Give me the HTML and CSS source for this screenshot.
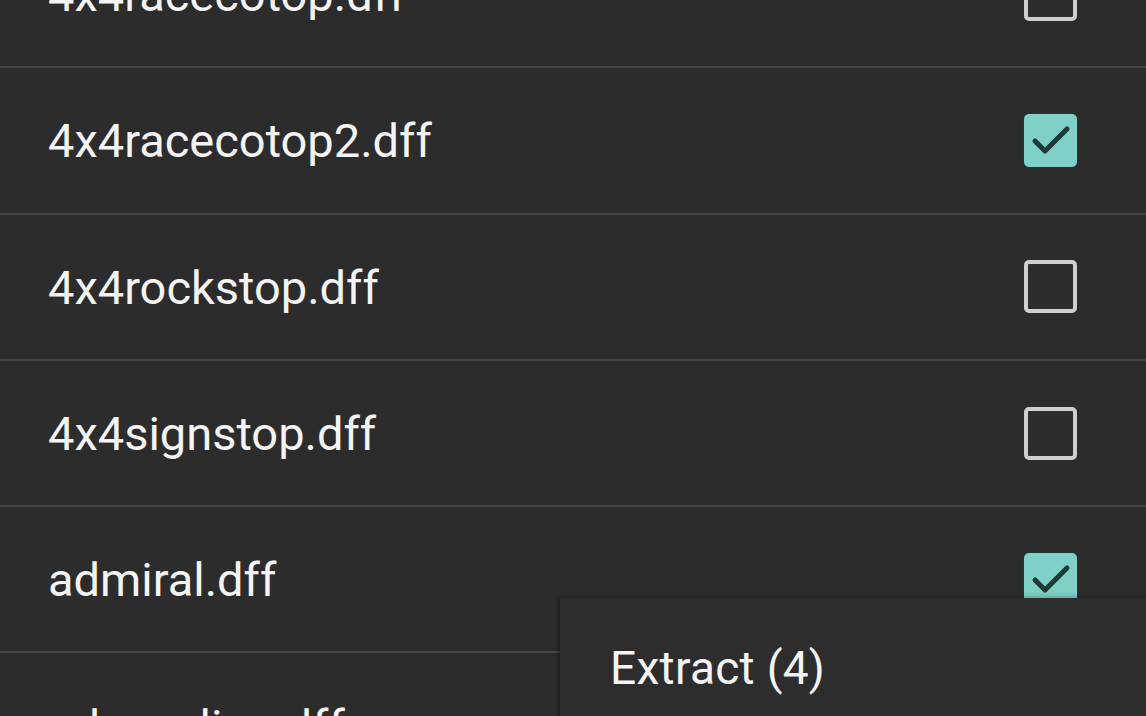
FILE: index.html
```html
<!DOCTYPE html>
<html>
<head>
<meta charset="utf-8">
<link rel="stylesheet" href="styles.css">
</head>
<body>
<div class="list">
  <div class="row"><span class="name">4x4racecotop.dff</span><span class="box"></span></div>
  <div class="row"><span class="name">4x4racecotop2.dff</span><span class="box checked"><svg viewBox="0 0 53 53" width="53" height="53"><path d="M11 27 L21 37 L43 15" fill="none" stroke="#1d3a37" stroke-width="5" stroke-linecap="round" stroke-linejoin="round"/></svg></span></div>
  <div class="row"><span class="name">4x4rockstop.dff</span><span class="box"></span></div>
  <div class="row"><span class="name">4x4signstop.dff</span><span class="box"></span></div>
  <div class="row"><span class="name">admiral.dff</span><span class="box checked"><svg viewBox="0 0 53 53" width="53" height="53"><path d="M11 27 L21 37 L43 15" fill="none" stroke="#1d3a37" stroke-width="5" stroke-linecap="round" stroke-linejoin="round"/></svg></span></div>
  <div class="row"><span class="name">adsnesline.dff</span><span class="box"></span></div>
</div>
<div class="menu">
  <div class="menu-item">Extract (4)</div>
</div>
</body>
</html>
```
FILE: styles.css
```css
html, body {
  margin: 0;
  padding: 0;
  background: #2c2c2c;
  overflow: hidden;
  height: 716px;
}
body {
  font-family: Roboto, "Noto Sans", sans-serif;
  color: #f4f4f4;
  position: relative;
}
.list {
  margin-top: -78px;
}
.row {
  height: 144.3px;
  border-bottom: 2px solid #464646;
  display: flex;
  align-items: center;
  justify-content: space-between;
  padding: 0 69px 0 48px;
}
.name {
  font-size: 47px;
  line-height: 56px;
  padding-top: 2px;
}
.box {
  width: 53px;
  height: 53px;
  box-sizing: border-box;
  border: 4px solid #cfcfcf;
  border-radius: 5px;
  display: flex;
}
.box.checked {
  border: none;
  background: #7fd0c6;
  box-shadow: 0 0 0 1px #1f3634;
}
.menu {
  position: absolute;
  left: 560px;
  top: 598px;
  width: 620px;
  height: 200px;
  background: #2d2d2d;
  box-shadow: -2px 0 6px rgba(0,0,0,0.35);
}
.menu-item {
  padding: 40px 0 0 50px;
  font-size: 46px;
  line-height: 60px;
  letter-spacing: 0.3px;
}
```
